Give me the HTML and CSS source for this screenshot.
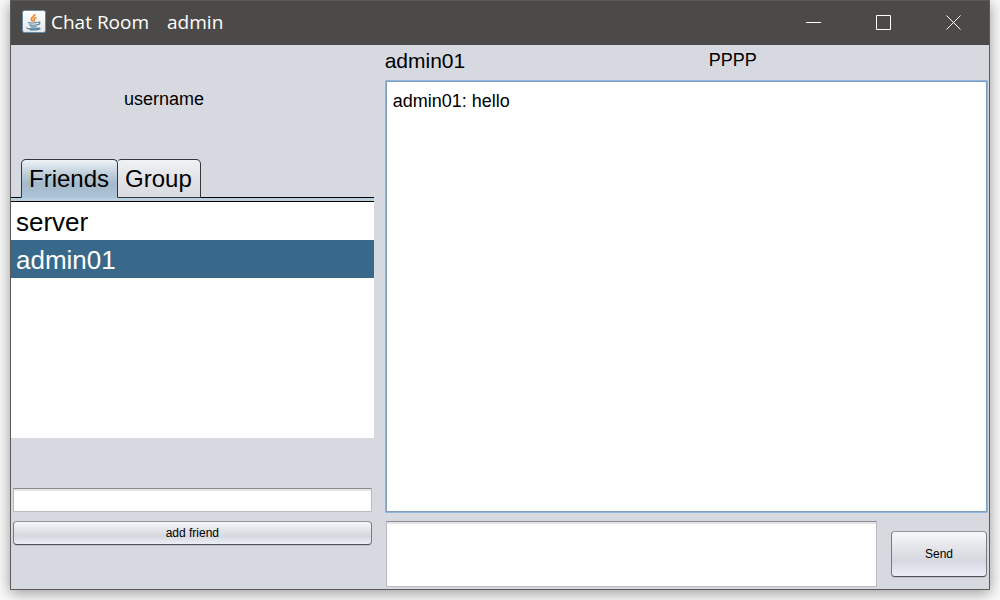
FILE: index.html
```html
<!DOCTYPE html>
<html lang="en">
<head>
<meta charset="utf-8">
<meta name="viewport" content="width=device-width, initial-scale=1">
<title>Chat Room</title>
<link rel="stylesheet" href="styles.css">
</head>
<body>
<div class="window">
  <header class="titlebar">
    <svg class="app-icon" viewBox="0 0 24 24" aria-hidden="true">
      <defs><linearGradient id="tile" x1="0" y1="0" x2="0" y2="1"><stop offset="0" stop-color="#fff"/><stop offset="1" stop-color="#e2e7eb"/></linearGradient></defs>
      <rect x="0.500" y="0.500" width="23" height="22" rx="2" fill="url(#tile)" stroke="#6688a3"/>
      <path d="M12.800 4c.8 2-4 3-3.500 5.300.1 1 1.300 1.600 1.600 2.200M14.500 7.500c-2.200.6-3 1.400-2.300 2.500.4.700.3 1.100-.4 1.500" fill="none" stroke="#ee8425" stroke-width="1.600"/>
      <path d="M6.500 12.300c-1 .9 7.500.9 9 0M7.500 14.500c.3 1 6.400 1 8 .1M8.500 16.500c.6.8 5 .8 6.200.1M15.800 12.200c3-.7 2.600 2.300-.4 2.800M5 17.500c-1.200 1.900 10.500 1.800 12.500.1M8 19.800c4 .4 8.500.2 10.500-1.300" fill="none" stroke="#53809f" stroke-width="1.200"/>
    </svg>
    <h1 class="title"><span>Chat Room</span><span>admin</span></h1>
    <div class="controls">
      <button class="control" type="button" aria-label="Minimize"><svg viewBox="0 0 16 16" class="control-icon"><path d="M0 7.500h15"/></svg></button>
      <button class="control" type="button" aria-label="Maximize"><svg viewBox="0 0 16 16" class="control-icon"><path d="M.5 .5h14v14H.5z"/></svg></button>
      <button class="control" type="button" aria-label="Close"><svg viewBox="0 0 16 16" class="control-icon"><path d="M.5 .5l14 14M14.500 .5l-14 14"/></svg></button>
    </div>
  </header>
  <main class="content">
    <section class="sidebar">
      <div class="profile">username</div>
      <div class="tabs" role="tablist">
        <button class="tab tab-active" type="button" role="tab" aria-selected="true">Friends</button>
        <button class="tab" type="button" role="tab" aria-selected="false">Group</button>
      </div>
      <ul class="friends">
        <li class="friend">server</li>
        <li class="friend friend-selected">admin01</li>
      </ul>
      <form class="add-form">
        <input class="field" type="text" aria-label="Friend name">
        <button class="button" type="button">add friend</button>
      </form>
    </section>
    <section class="chat">
      <div class="chat-header">
        <h2 class="contact">admin01</h2>
        <span class="status">PPPP</span>
      </div>
      <textarea class="messages" aria-label="Conversation" readonly>admin01: hello</textarea>
      <form class="composer">
        <textarea class="field message" aria-label="Message"></textarea>
        <button class="button send" type="button">Send</button>
      </form>
    </section>
  </main>
</div>
</body>
</html>
```
FILE: styles.css
```css
* {
  box-sizing: border-box;
}

body {
  margin: 0;
  min-height: 100vh;
  display: flex;
  padding: 0 10px 10px;
  background: #fafafa;
  color: #000;
  font-family: "Liberation Sans", Arial, sans-serif;
  overflow: hidden;
}

button,
input,
textarea {
  font-family: inherit;
  color: inherit;
}

.window {
  flex: 1;
  display: flex;
  flex-direction: column;
  border: 1px solid #5a5a59;
  background: #d6d9e0;
  box-shadow: 0 3px 14px rgba(0, 0, 0, 0.4);
}

.titlebar {
  display: flex;
  align-items: center;
  height: 44px;
  padding: 0 0 2px 11px;
  background: #4c4a48;
  color: #fff;
}

.app-icon {
  width: 24px;
  height: 24px;
}

.title {
  display: flex;
  gap: 18px;
  margin: 0 auto 0 5px;
  font: 400 19px/28px "Open Sans", "Noto Sans", sans-serif;
}

.controls {
  display: flex;
  align-self: stretch;
}

.control {
  width: 70px;
  padding: 2px 0 0;
  border: 0;
  background: none;
}

.control-icon {
  display: block;
  width: 16px;
  height: 16px;
  margin: 0 auto;
  fill: none;
  stroke: #fff;
}

.content {
  flex: 1;
  display: grid;
  grid-template-columns: 3fr 5fr;
  column-gap: 11px;
}

.sidebar,
.chat {
  display: flex;
  flex-direction: column;
  min-width: 0;
}

.profile {
  height: 114px;
  padding: 44px 0 0 113px;
  font-size: 18px;
  line-height: 20px;
}

.tabs {
  display: flex;
  height: 43px;
  padding: 0 10px;
  background: linear-gradient(#000, #000) 0 38px / 100% 1px no-repeat,
    linear-gradient(#b8cfe0, #b8cfe0) 0 39px / 100% 3px no-repeat;
  border-bottom: 1px solid #000;
}

.tab {
  height: 39px;
  padding: 0 8px 0 7px;
  border: 1px solid #33363c;
  border-left-width: 0;
  border-radius: 3px 5px 0 0;
  background: linear-gradient(#f1f2f5, #e2e3e8 50%, #d9dbe1);
  font-size: 24px;
  line-height: 36px;
}

.tab-active {
  border-left-width: 1px;
  border-bottom-color: #adc4d6;
  border-radius: 5px 5px 0 0;
  background: linear-gradient(#edf3f8, #c2d0dc 35%, #a3b9cb 65%, #adc4d6);
}

.friends {
  flex: 1;
  margin: 0;
  padding: 0;
  background: #fff;
  list-style: none;
}

.friend {
  padding: 2px 5px 0;
  font-size: 26px;
  line-height: 36px;
}

.friend-selected {
  background: #39698a;
  color: #fff;
}

.add-form {
  display: flex;
  flex-direction: column;
  gap: 9px;
  padding: 50px 2px 44px;
}

.field {
  height: 24px;
  margin: 0;
  padding: 4px;
  border: 1px solid #b9bbc0;
  border-top-color: #8b8d92;
  border-radius: 0;
  background: #fff;
  box-shadow: inset 0 2px 1px #e3e3e3;
  outline: 0;
  font-size: 12px;
}

.button {
  height: 24px;
  padding: 0;
  border: 1px solid #777a82;
  border-top-color: #92949b;
  border-bottom-color: #505258;
  border-radius: 4px;
  background: linear-gradient(#f7f8fa, #e3e5e9 35%, #d5d8df 65%, #eceff7);
  box-shadow: 0 1px 0 #bfc2c9;
  font-size: 12px;
}

.chat-header {
  display: grid;
  grid-template-columns: 324px 1fr;
  height: 35px;
  line-height: 30px;
}

.contact {
  margin: 0;
  font-size: 21px;
  font-weight: 400;
  line-height: 32px;
}

.status {
  font-size: 18px;
}

.messages {
  flex: 1;
  margin: 0 1px 0 0;
  padding: 10px 7px;
  border: 1px solid #8fb5da;
  border-radius: 1px;
  background: #fff;
  box-shadow: inset 0 0 0 1px #7f9dbc;
  outline: 0;
  resize: none;
  font-size: 18px;
  line-height: 20px;
}

.composer {
  display: flex;
  align-items: center;
  gap: 14px;
  padding: 8px 2px 2px 1px;
}

.message {
  flex: 1;
  height: 66px;
  resize: none;
}

.send {
  width: 96px;
  height: 46px;
}
```
